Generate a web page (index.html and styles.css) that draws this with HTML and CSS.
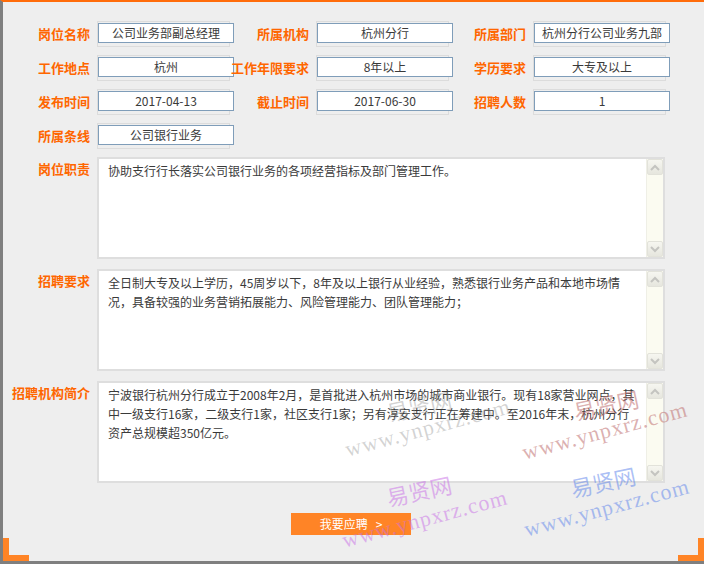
FILE: index.html
```html
<!DOCTYPE html>
<html lang="zh-CN">
<head>
<meta charset="utf-8">
<title>岗位详情</title>
<link rel="stylesheet" href="styles.css">
</head>
<body>
<div class="page">
  <div class="fields">
    <div class="lbl">岗位名称</div><div class="cell"><div class="val">公司业务部副总经理</div></div>
    <div class="lbl">所属机构</div><div class="cell"><div class="val">杭州分行</div></div>
    <div class="lbl">所属部门</div><div class="cell"><div class="val">杭州分行公司业务九部</div></div>

    <div class="lbl">工作地点</div><div class="cell"><div class="val">杭州</div></div>
    <div class="lbl">工作年限要求</div><div class="cell"><div class="val">8年以上</div></div>
    <div class="lbl">学历要求</div><div class="cell"><div class="val">大专及以上</div></div>

    <div class="lbl">发布时间</div><div class="cell"><div class="val">2017-04-13</div></div>
    <div class="lbl">截止时间</div><div class="cell"><div class="val">2017-06-30</div></div>
    <div class="lbl">招聘人数</div><div class="cell"><div class="val">1</div></div>

    <div class="lbl">所属条线</div><div class="cell"><div class="val">公司银行业务</div></div>
  </div>

  <div class="blocks">
    <div class="lbl lbl-top">岗位职责</div>
    <div class="area">
      <div class="area-text">协助支行行长落实公司银行业务的各项经营指标及部门管理工作。</div>
      <div class="sb">
        <div class="sb-btn"><svg width="10" height="7" viewBox="0 0 10 7"><path d="M1 6 L5 2 L9 6" fill="none" stroke="#c4c4c0" stroke-width="2"/></svg></div>
        <div class="sb-btn"><svg width="10" height="7" viewBox="0 0 10 7"><path d="M1 1 L5 5 L9 1" fill="none" stroke="#c4c4c0" stroke-width="2"/></svg></div>
      </div>
    </div>

    <div class="lbl lbl-top">招聘要求</div>
    <div class="area">
      <div class="area-text">全日制大专及以上学历，45周岁以下，8年及以上银行从业经验，熟悉银行业务产品和本地市场情<br>况，具备较强的业务营销拓展能力、风险管理能力、团队管理能力；</div>
      <div class="sb">
        <div class="sb-btn"><svg width="10" height="7" viewBox="0 0 10 7"><path d="M1 6 L5 2 L9 6" fill="none" stroke="#c4c4c0" stroke-width="2"/></svg></div>
        <div class="sb-btn"><svg width="10" height="7" viewBox="0 0 10 7"><path d="M1 1 L5 5 L9 1" fill="none" stroke="#c4c4c0" stroke-width="2"/></svg></div>
      </div>
    </div>

    <div class="lbl lbl-top">招聘机构简介</div>
    <div class="area">
      <div class="area-text">宁波银行杭州分行成立于2008年2月，是首批进入杭州市场的城市商业银行。现有18家营业网点，其<br>中一级支行16家，二级支行1家，社区支行1家；另有淳安支行正在筹建中。至2016年末，杭州分行<br>资产总规模超350亿元。</div>
      <div class="sb">
        <div class="sb-btn"><svg width="10" height="7" viewBox="0 0 10 7"><path d="M1 6 L5 2 L9 6" fill="none" stroke="#c4c4c0" stroke-width="2"/></svg></div>
        <div class="sb-btn"><svg width="10" height="7" viewBox="0 0 10 7"><path d="M1 1 L5 5 L9 1" fill="none" stroke="#c4c4c0" stroke-width="2"/></svg></div>
      </div>
    </div>
  </div>

  <div class="actions">
    <a class="apply">我要应聘&nbsp;&nbsp;&nbsp;&gt;</a>
  </div>
</div>

<div class="corner corner-l"></div>
<div class="corner corner-r"></div>

<div class="wm wm-cn wm-gray" style="left:385px;top:390px">易贤网</div>
<div class="wm wm-en wm-gray" style="left:342px;top:415px">www.ynpxrz.com</div>
<div class="wm wm-cn wm-red" style="left:572px;top:389px">易贤网</div>
<div class="wm wm-en wm-red" style="left:519px;top:418px">www.ynpxrz.com</div>
<div class="wm wm-cn wm-blue" style="left:569px;top:466px">易贤网</div>
<div class="wm wm-en wm-blue" style="left:521px;top:495px">www.ynpxrz.com</div>
<div class="wm wm-cn wm-purple" style="left:385px;top:475px">易贤网</div>
<div class="wm wm-en wm-purple" style="left:339px;top:506px">www.ynpxrz.com</div>
</body>
</html>
```

FILE: styles.css
```css
html, body {
  margin: 0;
  padding: 0;
}

body {
  position: relative;
  width: 704px;
  height: 564px;
  overflow: hidden;
  background: #eeeeee;
  font-family: "Noto Sans CJK SC", "Liberation Sans", sans-serif;
}

.page {
  box-sizing: border-box;
  width: 704px;
  height: 564px;
  background: #eeeeee;
  border-left: 3px solid #7f7f7f;
  border-bottom: 3px solid #7f7f7f;
  border-top: 2px solid #ff6c0a;
  padding-top: 19px;
}

.fields {
  display: grid;
  grid-template-columns: 94px 133px 86px 134px 83px 134px;
  grid-auto-rows: 26px;
  row-gap: 8px;
}

.lbl {
  text-align: right;
  padding-right: 7px;
  font-size: 13px;
  font-weight: bold;
  line-height: 26px;
  color: #ff6600;
  white-space: nowrap;
}

.cell {
  box-sizing: border-box;
  width: 133px;
  height: 26px;
  border: 1px solid #dcdcdc;
}

.val {
  box-sizing: border-box;
  width: 136px;
  height: 20px;
  margin-top: 1px;
  border: 1px solid #7f9db9;
  background: #ffffff;
  text-align: center;
  font-size: 12px;
  line-height: 18px;
  color: #3a3a3a;
  white-space: nowrap;
}

.blocks {
  margin-top: 8px;
  display: grid;
  grid-template-columns: 94px 568px;
  grid-auto-rows: 102px;
  row-gap: 10px;
}

.lbl-top {
  line-height: 16px;
  padding-top: 4px;
}

.area {
  box-sizing: border-box;
  display: flex;
  border: 2px solid #dedede;
  background: #ffffff;
}

.area-text {
  flex: 1;
  padding: 2px 8px 0 9px;
  font-size: 12px;
  line-height: 19px;
  color: #3a3a3a;
  white-space: nowrap;
}

.sb {
  width: 16px;
  display: flex;
  flex-direction: column;
  justify-content: space-between;
  background: #fbfbf1;
  border-left: 1px solid #efefe6;
}

.sb-btn {
  box-sizing: border-box;
  height: 16px;
  display: flex;
  align-items: center;
  justify-content: center;
  background: linear-gradient(#f6f6f0, #e6e6de);
  border: 1px solid #e2e2da;
  border-radius: 2px;
}

.actions {
  margin-top: 30px;
  padding-left: 288px;
  display: flex;
}

.apply {
  width: 120px;
  height: 22px;
  background: #ff8426;
  color: #ffffff;
  font-size: 12px;
  line-height: 22px;
  text-align: center;
}

.corner {
  position: absolute;
  top: 538px;
  box-sizing: border-box;
  width: 26px;
  height: 23px;
  border-bottom: 6px solid #ff8426;
}

.corner-l {
  left: 3px;
  border-left: 6px solid #ff8426;
}

.corner-r {
  left: 678px;
  border-right: 6px solid #ff8426;
}

.wm {
  position: absolute;
  white-space: nowrap;
  pointer-events: none;
  text-align: center;
}

.wm-en {
  width: 172px;
  height: 26px;
  line-height: 26px;
  font-family: "Liberation Serif", serif;
  font-size: 22px;
  letter-spacing: 1px;
  transform: rotate(-15deg);
}

.wm-cn {
  width: 68px;
  height: 30px;
  line-height: 30px;
  font-family: "Noto Sans CJK SC", sans-serif;
  font-size: 22px;
  transform: rotate(-12deg);
}

.wm-gray { color: rgba(140, 140, 140, 0.38); }
.wm-red { color: rgba(190, 110, 110, 0.55); }
.wm-blue { color: rgba(90, 130, 235, 0.5); }
.wm-purple { color: rgba(200, 110, 230, 0.5); }
```
